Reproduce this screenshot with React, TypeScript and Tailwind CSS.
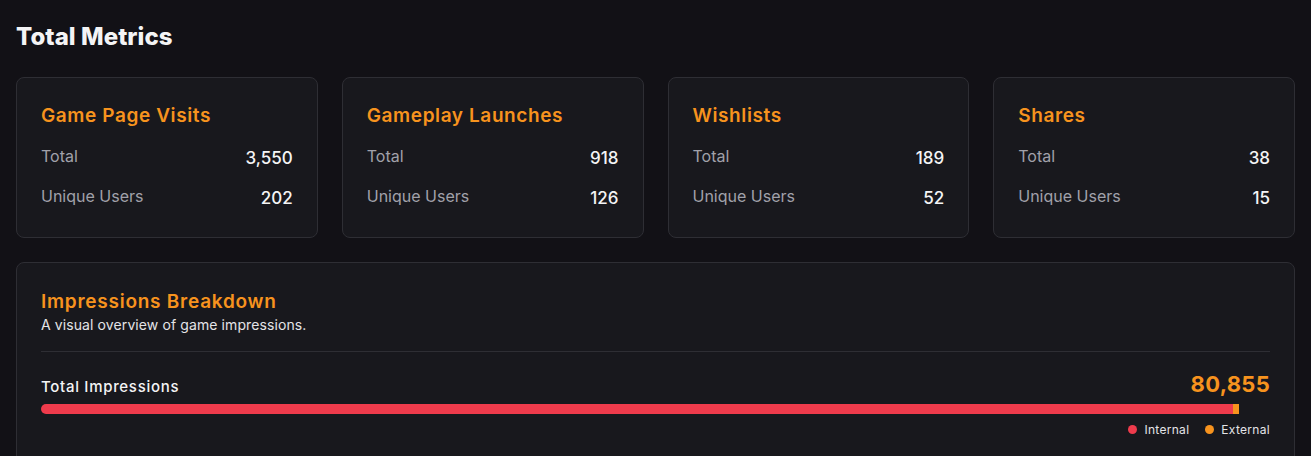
import React from "react";

const metrics = [
  { title: "Game Page Visits", total: "3,550", unique: "202" },
  { title: "Gameplay Launches", total: "918", unique: "126" },
  { title: "Wishlists", total: "189", unique: "52" },
  { title: "Shares", total: "38", unique: "15" },
];

export default function App() {
  return (
    <div
      className="min-h-[456px] w-full bg-[#121116] px-4 pt-[21px] text-white"
      style={{ fontFamily: "Inter, 'Noto Sans', sans-serif" }}
    >
      <h1 className="mb-6 text-2xl leading-8 font-extrabold tracking-[0.05px] text-[#f4f4f5]">
        Total Metrics
      </h1>
      <div className="grid grid-cols-4 gap-6">
        {metrics.map((m) => (
          <div
            key={m.title}
            className="h-[161px] rounded-lg border border-[#2e2e34] bg-[#18181d] p-6"
          >
            <div className="mb-[14px] text-[19px] leading-7 font-semibold tracking-[0.6px] text-[#f7931e]">
              {m.title}
            </div>
            <div className="flex flex-col gap-3">
              <div className="flex h-7 items-start justify-between">
                <span className="text-base leading-6 text-[#a1a1aa]">Total</span>
                <span className="text-[17px] leading-7 font-medium text-[#f4f4f5]">{m.total}</span>
              </div>
              <div className="flex h-7 items-start justify-between">
                <span className="text-base leading-6 text-[#a1a1aa]">Unique Users</span>
                <span className="text-[17px] leading-7 font-medium text-[#f4f4f5]">{m.unique}</span>
              </div>
            </div>
          </div>
        ))}
      </div>
      <div className="mt-6 rounded-lg border border-[#2e2e34] bg-[#18181d] px-6 pt-[25px] pb-8">
        <div className="text-[19px] leading-7 font-semibold tracking-[0.75px] text-[#f7931e]">
          Impressions Breakdown
        </div>
        <div className="-mt-px text-sm leading-5 tracking-[0.1px] text-[#e4e4e7]">
          A visual overview of game impressions.
        </div>
        <div className="mt-4 h-px bg-[#2e2e34]" />
        <div className="mt-[18px] flex items-baseline justify-between">
          <span className="text-[15px] font-medium tracking-[0.7px] text-[#f4f4f5]">
            Total Impressions
          </span>
          <span className="text-[22px] leading-7 font-bold tracking-[0.3px] text-[#f7931e]">
            80,855
          </span>
        </div>
        <div className="mt-[5px] flex h-[10px] w-[97.5%] overflow-hidden rounded-l-full">
          <div className="h-full flex-1 bg-[#ef3b4c]" />
          <div className="h-full w-[6px] bg-[#f7931e]" />
        </div>
        <div className="mt-2 flex items-center justify-end gap-4 text-xs leading-4 tracking-[0.3px] text-[#e4e4e7]">
          <div className="flex items-center gap-[7px]">
            <span className="inline-block h-[9px] w-[9px] rounded-full bg-[#ef3b4c]" />
            <span>Internal</span>
          </div>
          <div className="flex items-center gap-[7px]">
            <span className="inline-block h-[9px] w-[9px] rounded-full bg-[#f7931e]" />
            <span>External</span>
          </div>
        </div>
      </div>
    </div>
  );
}
